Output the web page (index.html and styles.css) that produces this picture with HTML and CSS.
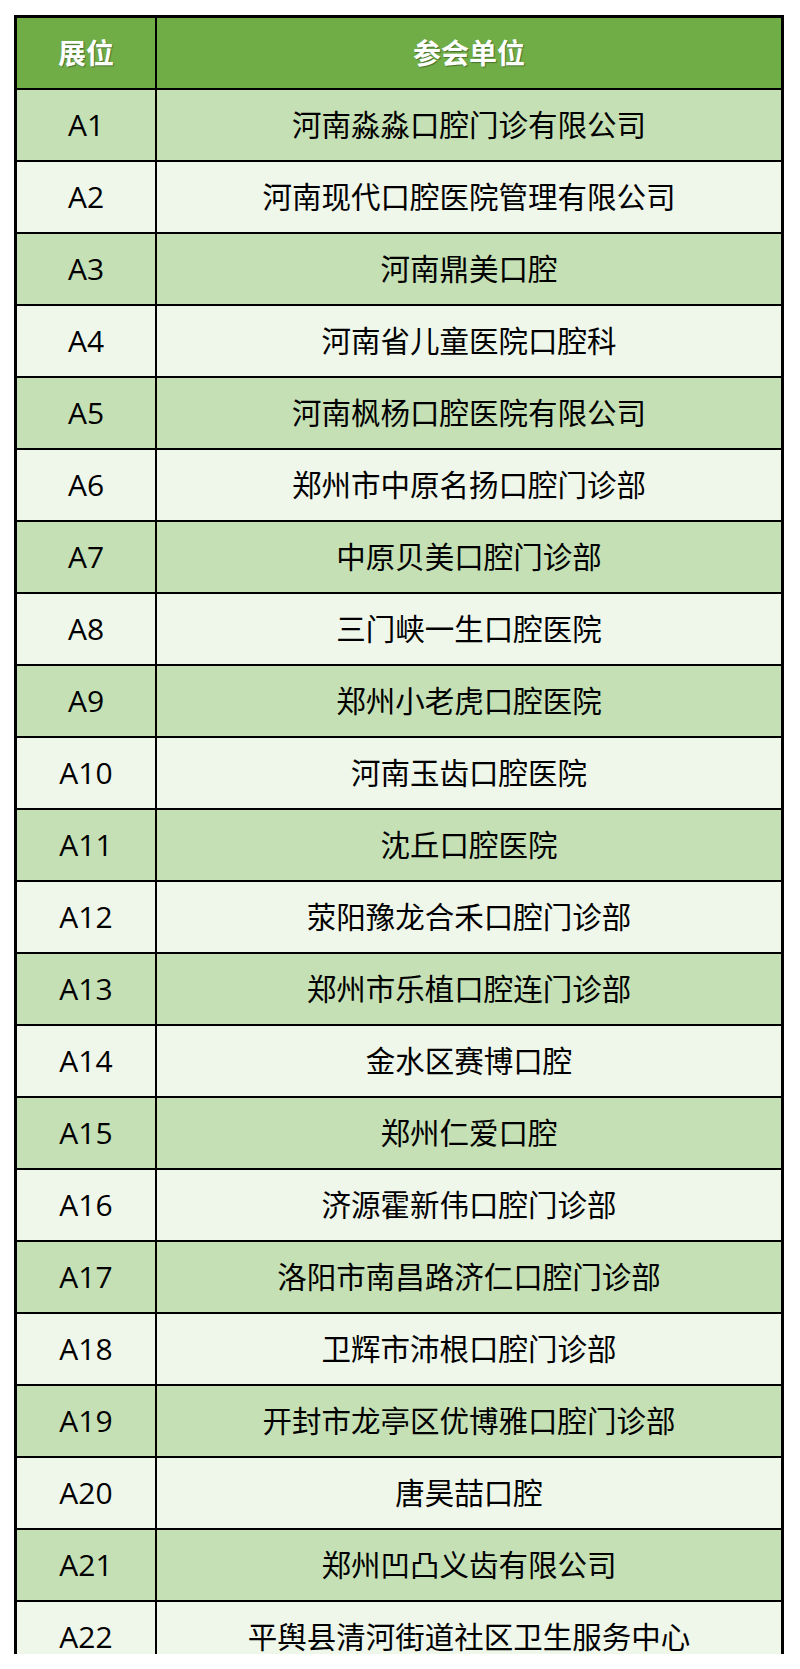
FILE: index.html
```html
<!DOCTYPE html>
<html lang="zh-CN">
<head>
<meta charset="utf-8">
<title>展位</title>
<link rel="stylesheet" href="styles.css">
</head>
<body>
<div class="page">
<table class="booths">
<thead>
<tr><th class="c1">展位</th><th>参会单位</th></tr>
</thead>
<tbody>
<tr class="odd"><td class="c1">A1</td><td>河南淼淼口腔门诊有限公司</td></tr>
<tr class="even"><td class="c1">A2</td><td>河南现代口腔医院管理有限公司</td></tr>
<tr class="odd"><td class="c1">A3</td><td>河南鼎美口腔</td></tr>
<tr class="even"><td class="c1">A4</td><td>河南省儿童医院口腔科</td></tr>
<tr class="odd"><td class="c1">A5</td><td>河南枫杨口腔医院有限公司</td></tr>
<tr class="even"><td class="c1">A6</td><td>郑州市中原名扬口腔门诊部</td></tr>
<tr class="odd"><td class="c1">A7</td><td>中原贝美口腔门诊部</td></tr>
<tr class="even"><td class="c1">A8</td><td>三门峡一生口腔医院</td></tr>
<tr class="odd"><td class="c1">A9</td><td>郑州小老虎口腔医院</td></tr>
<tr class="even"><td class="c1">A10</td><td>河南玉齿口腔医院</td></tr>
<tr class="odd"><td class="c1">A11</td><td>沈丘口腔医院</td></tr>
<tr class="even"><td class="c1">A12</td><td>荥阳豫龙合禾口腔门诊部</td></tr>
<tr class="odd"><td class="c1">A13</td><td>郑州市乐植口腔连门诊部</td></tr>
<tr class="even"><td class="c1">A14</td><td>金水区赛博口腔</td></tr>
<tr class="odd"><td class="c1">A15</td><td>郑州仁爱口腔</td></tr>
<tr class="even"><td class="c1">A16</td><td>济源霍新伟口腔门诊部</td></tr>
<tr class="odd"><td class="c1">A17</td><td>洛阳市南昌路济仁口腔门诊部</td></tr>
<tr class="even"><td class="c1">A18</td><td>卫辉市沛根口腔门诊部</td></tr>
<tr class="odd"><td class="c1">A19</td><td>开封市龙亭区优博雅口腔门诊部</td></tr>
<tr class="even"><td class="c1">A20</td><td>唐昊喆口腔</td></tr>
<tr class="odd"><td class="c1">A21</td><td>郑州凹凸义齿有限公司</td></tr>
<tr class="even"><td class="c1">A22</td><td>平舆县清河街道社区卫生服务中心</td></tr>
</tbody>
</table>
</div>
</body>
</html>
```
FILE: styles.css
```css
html, body {
  margin: 0;
  padding: 0;
  background: #ffffff;
}
.page {
  height: 1654px;
  overflow: hidden;
  padding: 15px 0 0 14px;
  box-sizing: border-box;
}
.booths {
  border-collapse: collapse;
  width: 770px;
  border: 3px solid #000;
  font-family: "Open Sans", "Noto Sans CJK SC", sans-serif;
  font-size: 29.5px;
  color: #000;
  table-layout: fixed;
}
.booths th,
.booths td {
  border: 2px solid #000;
  padding: 0;
  height: 70px;
  text-align: center;
  vertical-align: middle;
  line-height: 1;
}
.booths th {
  background: #70ad47;
  color: #ffffff;
  font-weight: 700;
  font-size: 28px;
  text-shadow: 1px 1px 1px rgba(0,0,0,0.35);
}
.booths .c1 {
  width: 138px;
}
.booths td.c1 {
  font-size: 30px;
}
.odd td {
  background: #c5e0b4;
}
.even td {
  background: #eff6ea;
}
```
